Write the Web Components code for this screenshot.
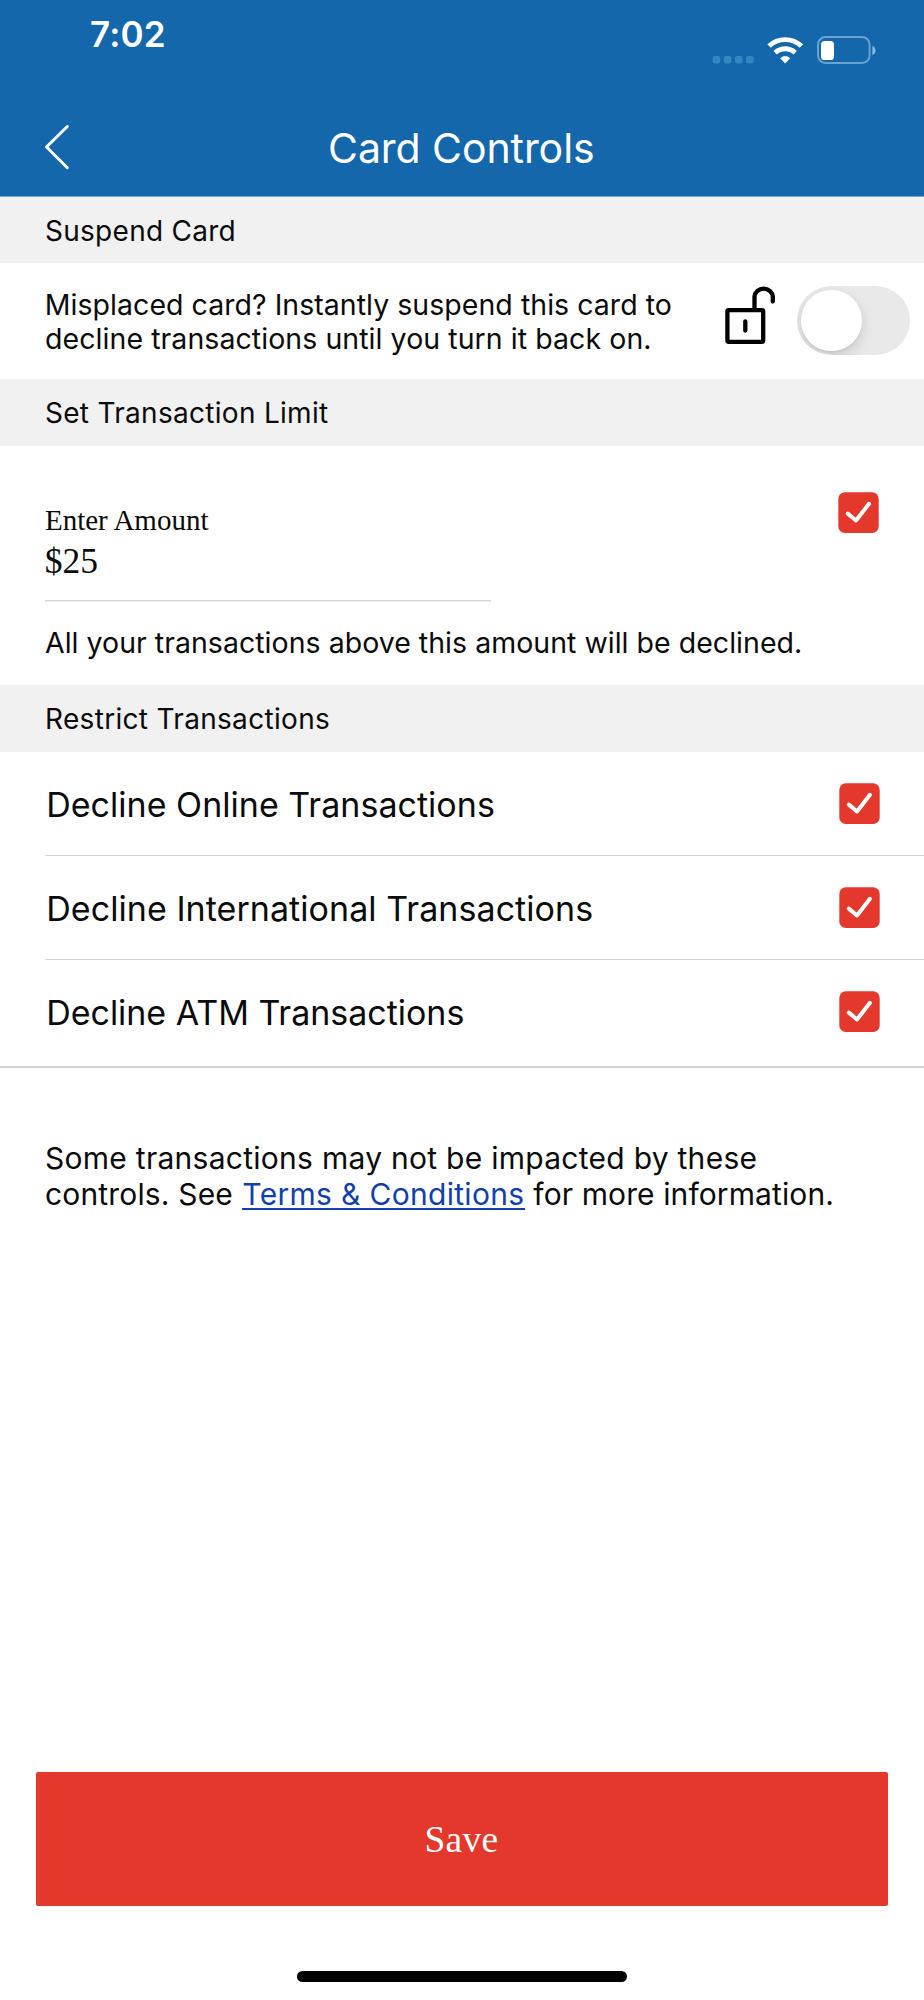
<!DOCTYPE html>
<html lang="en">
<head>
<meta charset="utf-8">
<title>Card Controls</title>
<style>
html,body{margin:0;background:#fff}
body{width:924px;height:2000px;overflow:hidden;font-family:Inter,"Liberation Sans",sans-serif;color:#0b0b0b}
</style>
</head>
<body>
<card-controls-page></card-controls-page>
<script>
const define = (name, html, ready) => customElements.define(name, class extends HTMLElement {
  constructor() {
    super();
    this.attachShadow({ mode: 'open' }).innerHTML = html;
  }
  connectedCallback() { if (ready) ready(this); }
});

// One line of text whose tracking is adjusted so that its ink spans `w` pixels.
const canvas = document.createElement('canvas').getContext('2d');
define('ui-line', `<style>:host{display:block;white-space:pre;flex:none}</style><slot></slot>`, el => {
  const size = el.getAttribute('size');
  const weight = el.getAttribute('weight') || '400';
  const family = el.hasAttribute('serif') ? '"Liberation Serif",serif' : 'Inter,"Liberation Sans",sans-serif';
  el.style.font = `${weight} ${size}px/${el.getAttribute('lh')}px ${family}`;
  const text = el.textContent;
  canvas.font = `${weight} ${size}px ${family}`;
  const m = canvas.measureText(text);
  const w = +el.getAttribute('w');
  const gap = (w - m.actualBoundingBoxRight - m.actualBoundingBoxLeft) / (text.length - 1);
  el.style.letterSpacing = gap.toFixed(3) + 'px';
  el.style.width = w + 'px';
  el.style.textIndent = m.actualBoundingBoxLeft.toFixed(2) + 'px';
});

define('status-bar', `<style>
:host{display:flex;justify-content:space-between;height:100px;padding:0 48px 0 91px;color:#fff}
svg{display:block;flex:none}
</style>
<ui-line size="35" lh="69" weight="600" w="72.7">7:02</ui-line>
<svg width="166" height="70" viewBox="710 0 166 70">
<g fill="#3586bf"><rect x="712.6" y="56" width="7.6" height="7.4" rx="2.2"/><rect x="723.8" y="56" width="7.6" height="7.4" rx="2.2"/><rect x="734.9" y="56" width="7.6" height="7.4" rx="2.2"/><rect x="746" y="56" width="7.6" height="7.4" rx="2.2"/></g>
<path d="M785.2 63.2L780.6 58.3Q785.2 54.4 789.8 58.3Z" fill="#fff" stroke="#fff" stroke-width=".6" stroke-linejoin="round"/>
<g fill="none" stroke="#fff" stroke-width="4.9"><path d="M769 46.1A23.5 23.5 0 0 1 801.4 46.1"/><path d="M775.2 52.7A14.6 14.6 0 0 1 795.2 52.7"/></g>
<rect x="818" y="37" width="51.6" height="26" rx="7.5" fill="none" stroke="#68a2cf" stroke-width="2"/>
<rect x="821" y="41" width="13" height="19" rx="3.6" fill="#fff"/>
<path d="M872.4 45.8Q875.6 47.4 875.6 50.4T872.4 55Z" fill="#8dbadd"/>
</svg>`);

define('nav-bar', `<style>
:host{display:grid;grid-template-columns:330px 1fr;align-items:center;height:96px;color:#fff}
svg{display:block;margin:-2px 0 0 44px}
</style>
<svg width="26" height="46" viewBox="44 124 26 46"><path d="M67.3 126.5L46.5 147L67.3 167.7" fill="none" stroke="#fff" stroke-width="3" stroke-linecap="round" stroke-linejoin="round"/></svg>
<ui-line size="41" lh="50" w="263"></ui-line>`, el => fitSlotted(el));

// Passes the host's text into the tracked line inside its shadow root.
function fitSlotted(el) {
  const line = el.shadowRoot.querySelector('ui-line');
  const text = el.textContent;
  if (el.getAttribute('w')) line.setAttribute('w', el.getAttribute('w'));
  line.textContent = text;
  line.remove();
  el.shadowRoot.querySelector('style').after(line);
  const lead = el.shadowRoot.querySelector('svg');
  if (lead) line.before(lead);
}

define('section-title', `<style>
:host{display:flex;align-items:center;height:67px;padding-left:46px;background:#f1f1f1;box-sizing:border-box}
:host([first]){height:66px;padding-top:2px}
:host([indent]){padding-left:47px}
</style><ui-line size="28" lh="34"></ui-line>`, fitSlotted);

define('check-box', `<style>:host{display:block;flex:none;width:41px;height:41px}svg{display:block}</style>
<svg width="41" height="41" viewBox="0 0 41 41"><rect x=".3" y=".3" width="40.4" height="40.6" rx="6.5" fill="#e4382c"/><path d="M9.8 21.6L18 28.5L31 11.8" fill="none" stroke="#fff" stroke-width="4" stroke-linecap="round" stroke-linejoin="round"/></svg>`);

define('lock-icon', `<style>:host{display:block;width:52px;height:62px}svg{display:block}</style>
<svg width="52" height="62" viewBox="724 284 52 62" fill="none" stroke="#000" stroke-width="4.3">
<rect x="727.4" y="310.2" width="35.8" height="31.6" rx="1.2"/>
<path d="M754.5 309V296.8A9.2 9.2 0 0 1 772.8 296.8V301.6" stroke-linecap="round"/>
<path d="M745.3 321.5V330.5" stroke-linecap="round"/></svg>`);

define('toggle-switch', `<style>
:host{display:flex;align-items:center;width:113.4px;height:69px;border-radius:35px;background:#e9e9e9;box-sizing:border-box;padding-left:4px;overflow:hidden}
i{width:60.5px;height:60.5px;border-radius:50%;background:#fff;box-shadow:0 5px 13px rgba(0,0,0,.14),0 2px 2px rgba(0,0,0,.04)}
</style><i></i>`);

define('suspend-row', `<style>
:host{display:grid;grid-template-columns:678px 73px 1fr;align-items:center;height:116px;padding-left:46px;box-sizing:border-box}
lock-icon{margin-top:-13px}
toggle-switch{margin-top:-1px}
.copy{padding-top:2px}
</style>
<div class="copy"><ui-line size="28.5" lh="34" w="624" style="margin-left:.8px">Misplaced card? Instantly suspend this card to</ui-line><ui-line size="28.5" lh="34" w="603.3">decline transactions until you turn it back on.</ui-line></div>
<lock-icon></lock-icon><toggle-switch></toggle-switch>`);

define('limit-form', `<style>
:host{display:block;height:239px;padding:54px 44.6px 0 45px;box-sizing:border-box}
.top{display:flex;justify-content:space-between;align-items:flex-start}
.field{width:446px;padding-bottom:20px;border-bottom:1px solid #d5d5d5;box-shadow:0 1px #eee}
check-box{margin-top:-7.6px}
.note{margin-top:22px}
</style>
<div class="top"><div class="field"><ui-line serif size="29" lh="40" w="165">Enter Amount</ui-line><ui-line serif size="35.5" lh="42" w="51.5" style="margin:0 0 -2px .8px">$25</ui-line></div><check-box></check-box></div>
<ui-line class="note" size="28.5" lh="40" w="755">All your transactions above this amount will be declined.</ui-line>`);

define('option-row', `<style>
:host{display:flex;align-items:center;justify-content:space-between;height:103px;margin-left:45px;padding:0 44.5px 0 3.2px;border-bottom:1px solid #d5d5d5}
:host([last]){height:103px;margin-left:0;padding:0 44.5px 3px 48.2px;border-bottom:2px solid #d3d3d3}
ui-line{padding-top:3.2px}
check-box{width:40.5px}
</style><ui-line size="34" lh="42"></ui-line><check-box></check-box>`, el => {
  fitSlotted(el);
});

define('foot-note', `<style>
:host{display:block;padding:72px 0 0 46px}
.row{display:flex}
.link{position:relative;margin-left:10px;width:283px;color:#133fae}
.link::after{content:"";position:absolute;left:0;right:0;top:32.4px;height:2px;background:#133fae}
</style>
<ui-line size="30" lh="36" w="710.5">Some transactions may not be impacted by these</ui-line>
<div class="row"><ui-line size="30" lh="36" w="186.3">controls. See</ui-line><div class="link"><ui-line size="30" lh="36" w="280" style="margin-left:1px">Terms &amp; Conditions</ui-line></div><ui-line size="30" lh="36" w="299" style="margin-left:8px">for more information.</ui-line></div>`);

define('save-button', `<style>
:host{display:flex;align-items:center;justify-content:center;height:133.4px;margin:0 36px 65px;padding-top:2px;border-radius:2px;background:#e4382c;color:#fff;box-sizing:border-box}
</style><ui-line serif size="37.5" lh="44" w="71"></ui-line>`, fitSlotted);

define('home-indicator', `<style>:host{display:block;width:330px;height:11.3px;margin:0 auto 18px;border-radius:6px;background:#000}</style>`);

define('card-controls-page', `<style>
:host{display:flex;flex-direction:column;height:2000px}
header{background:#1467ab;border-bottom:1px solid #71a5cf}
footer{margin-top:auto}
</style>
<header><status-bar></status-bar><nav-bar>Card Controls</nav-bar></header>
<section-title first w="187.6">Suspend Card</section-title>
<suspend-row></suspend-row>
<section-title w="282">Set Transaction Limit</section-title>
<limit-form></limit-form>
<section-title indent w="282">Restrict Transactions</section-title>
<option-row w="445.7">Decline Online Transactions</option-row>
<option-row w="544">Decline International Transactions</option-row>
<option-row w="415.2" last>Decline ATM Transactions</option-row>
<foot-note></foot-note>
<footer><save-button>Save</save-button><home-indicator></home-indicator></footer>`);
</script>
</body>
</html>
